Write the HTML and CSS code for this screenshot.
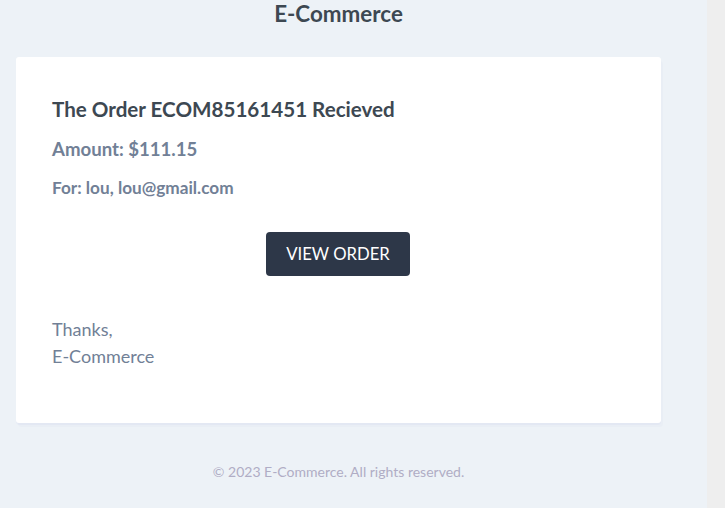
FILE: index.html
```html
<!DOCTYPE html>
<html lang="en">
<head>
<meta charset="utf-8">
<title>E-Commerce</title>
<link rel="stylesheet" href="styles.css">
</head>
<body>
<div class="page">
  <main class="wrapper">
    <header class="header">E-Commerce</header>
    <section class="card">
      <h1 class="title">The Order ECOM85161451 Recieved</h1>
      <h2 class="amount">Amount: $111.15</h2>
      <h3 class="for">For: lou, lou@gmail.com</h3>
      <div class="action">
        <a class="button" href="#">VIEW ORDER</a>
      </div>
      <p class="signoff">Thanks,<br>E-Commerce</p>
    </section>
    <footer class="footer">© 2023 E-Commerce. All rights reserved.</footer>
  </main>
  <div class="scrollbar"></div>
</div>
</body>
</html>
```
FILE: styles.css
```css
html, body {
  margin: 0;
  padding: 0;
  height: 100%;
}
body {
  font-family: Lato, "Open Sans", sans-serif;
  background: #edf2f7;
  color: #718096;
  overflow: hidden;
}
.page {
  display: flex;
  height: 508px;
}
.wrapper {
  flex: 1;
  padding-right: 30px;
  display: flex;
  flex-direction: column;
  align-items: center;
}
.header {
  height: 57px;
  box-sizing: border-box;
  padding-top: 1px;
  line-height: 26px;
  font-size: 22.4px;
  font-weight: 700;
  color: #3d4852;
  text-align: center;
}
.card {
  width: 645px;
  box-sizing: border-box;
  background: #fff;
  border-radius: 3px;
  padding: 36px 36px 36px;
  box-shadow: 0 2px 0 rgba(0, 0, 150, 0.025), 2px 4px 0 rgba(0, 0, 150, 0.015);
}
.title {
  margin: 0;
  font-size: 20.6px;
  line-height: 32px;
  font-weight: 700;
  color: #3d4852;
}
.amount {
  margin: 11px 0 0;
  font-size: 18.6px;
  line-height: 27px;
  font-weight: 700;
  color: #718096;
}
.for {
  margin: 14px 0 0;
  font-size: 17.2px;
  line-height: 22px;
  font-weight: 700;
  color: #718096;
}
.action {
  display: flex;
  justify-content: center;
  margin-top: 33px;
}
.button {
  display: block;
  width: 144px;
  height: 44px;
  padding-top: 1px;
  line-height: 43px;
  box-sizing: border-box;
  background: #2d3748;
  border-radius: 4px;
  color: #fff;
  text-align: center;
  text-decoration: none;
  font-size: 16.7px;
  margin-right: 1px;
}
.signoff {
  margin: 40px 0 17px;
  font-size: 18px;
  line-height: 27px;
  color: #718096;
}
.footer {
  margin-top: 39px;
  font-size: 14px;
  line-height: 20px;
  color: #b0adc5;
  text-align: center;
}
.scrollbar {
  width: 18px;
  flex: none;
  background: #eeeeee;
}
```
